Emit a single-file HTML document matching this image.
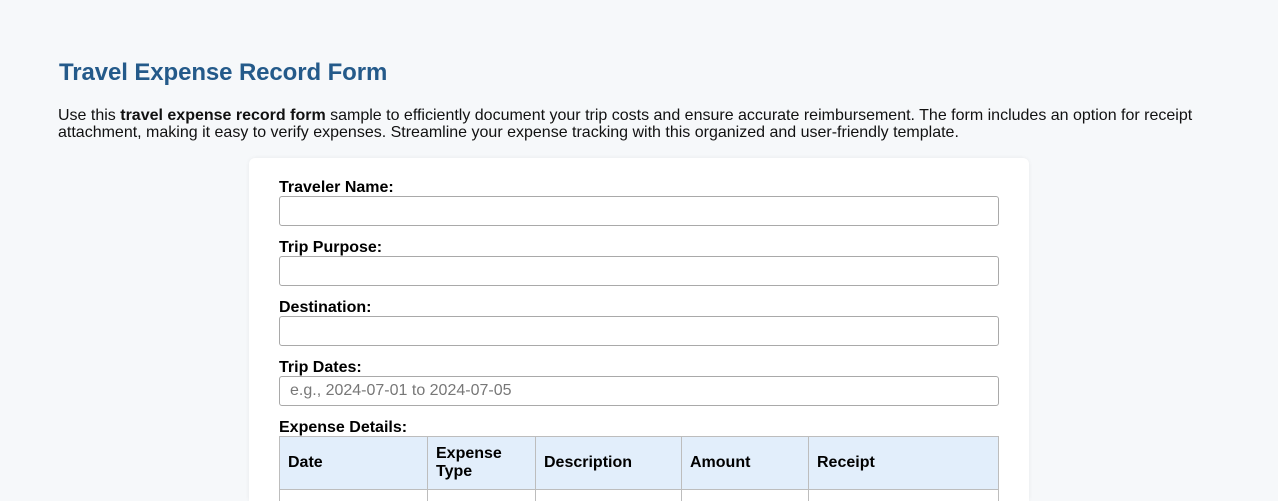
<!DOCTYPE html>
<html><head><meta charset="utf-8"><style>
html,body{margin:0;padding:0;height:501px;overflow:hidden;}
body{width:1278px;background:#f6f8fa;font-family:"Liberation Sans",Arial,sans-serif;color:#000;position:relative;}
h1{position:absolute;left:59px;top:59px;margin:0;font-size:24px;font-weight:bold;color:#245a8a;letter-spacing:-0.1px;}
p.intro{position:absolute;left:58px;top:107px;width:1170px;margin:0;font-size:16px;line-height:17px;color:#111;}
.card{position:absolute;left:249px;top:158px;width:780px;height:343px;overflow:hidden;background:#fff;border-radius:6px 6px 0 0;box-shadow:0 0 4px rgba(0,0,0,0.06);}
.lbl{position:absolute;left:30px;font-size:16px;font-weight:bold;line-height:18px;}
.inp{position:absolute;left:30px;width:718px;height:28px;border:1px solid #a9a9a9;border-radius:3px;background:#fff;font-size:16px;color:#777;line-height:28px;box-sizing:content-box;}
.inp span{padding-left:10px;}
table{position:absolute;left:30px;top:278px;width:720px;border-collapse:collapse;font-size:16px;}
th{background:#e2eefb;border:1px solid #bdbdbd;text-align:left;font-weight:bold;padding:0 8px;height:52px;line-height:18px;}
td{border:1px solid #bdbdbd;height:40px;}
</style></head><body>
<h1>Travel Expense Record Form</h1>
<p class="intro">Use this <b>travel expense record form</b> sample to efficiently document your trip costs and ensure accurate reimbursement. The form includes an option for receipt attachment, making it easy to verify expenses. Streamline your expense tracking with this organized and user-friendly template.</p>
<div class="card">
<div class="lbl" style="top:21px">Traveler Name:</div>
<div class="inp" style="top:38px"></div>
<div class="lbl" style="top:81px">Trip Purpose:</div>
<div class="inp" style="top:98px"></div>
<div class="lbl" style="top:141px">Destination:</div>
<div class="inp" style="top:158px"></div>
<div class="lbl" style="top:201px">Trip Dates:</div>
<div class="inp" style="top:218px"><span>e.g., 2024-07-01 to 2024-07-05</span></div>
<div class="lbl" style="top:261px">Expense Details:</div>
<table>
<tr><th style="width:131px">Date</th><th style="width:91px">Expense<br>Type</th><th style="width:129px">Description</th><th style="width:110px">Amount</th><th>Receipt</th></tr>
<tr><td></td><td></td><td></td><td></td><td></td></tr>
</table>
</div>
</body></html>
